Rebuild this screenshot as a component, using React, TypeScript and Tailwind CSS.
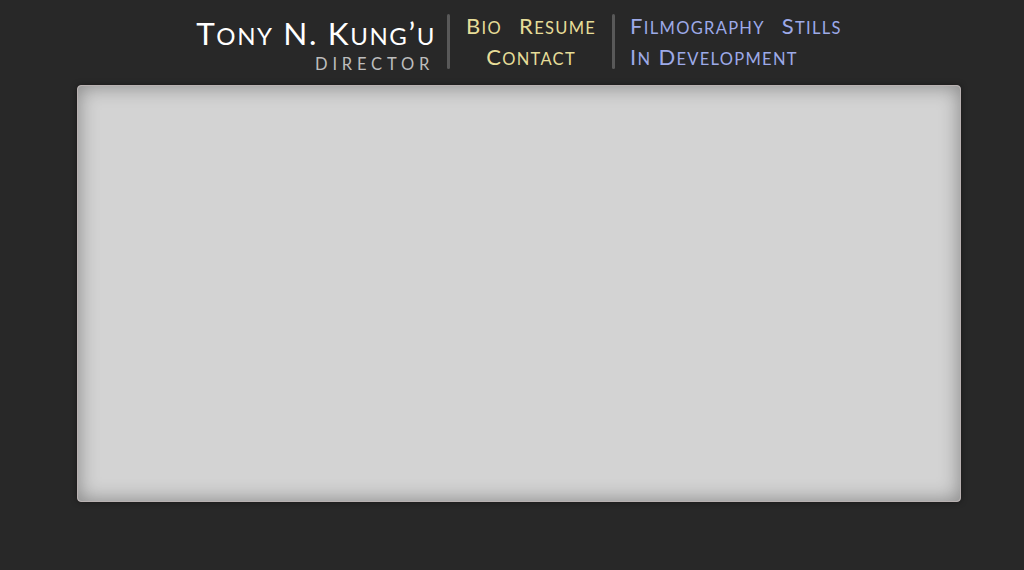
import type { ReactNode } from "react";

// Renders text in small caps: capitals at full size, lowercase as smaller capitals
function SmallCaps({ text, small }: { text: string; small: string }) {
    const parts: ReactNode[] = [];
    let buf = "";
    let bufLower = false;
    const flush = (key: number) => {
        if (!buf) return;
        parts.push(
            bufLower ? (
                <span key={key} className={small}>{buf.toUpperCase()}</span>
            ) : (
                <span key={key}>{buf}</span>
            )
        );
        buf = "";
    };
    [...text].forEach((ch, i) => {
        const lower = ch !== ch.toUpperCase();
        if (buf && lower !== bufLower) flush(i);
        bufLower = lower;
        buf += ch;
    });
    flush(text.length);
    return <>{parts}</>;
}

const yellowLinks = ["Bio", "Resume"];
const blueLinks = ["Filmography", "Stills"];

export default function App() {
    return (
        <main className="min-h-[570px] bg-[#282828] font-['Lato',sans-serif]">
            <div className="w-[884px] ml-[77px] pt-[14px]">
                {/* Header */}
                <header className="flex justify-center items-stretch h-[55px]">
                    <div className="flex flex-col items-end pr-[14px]">
                        <h1 className="text-[31.5px] leading-[34px] mt-[2px] text-white tracking-[1.6px] mr-[-3px] whitespace-nowrap">
                            <SmallCaps text="Tony N. Kung’u" small="text-[24px]" />
                        </h1>
                        <p className="text-[16.5px] leading-[16px] mt-[3px] text-[#bdbdbd] tracking-[4.8px] mr-[-1px] uppercase">
                            Director
                        </p>
                    </div>
                    <div className="w-[3px] rounded-full bg-[#595959]" />
                    <nav className="flex flex-col items-center px-[16px] -mt-[2px] text-[#e6dd98] text-[22px] leading-[28.5px] tracking-[1.3px] whitespace-nowrap">
                        <div className="flex gap-[17px]">
                            {yellowLinks.map((l) => (
                                <a key={l}><SmallCaps text={l} small="text-[16.5px]" /></a>
                            ))}
                        </div>
                        <a><SmallCaps text="Contact" small="text-[16.5px]" /></a>
                    </nav>
                    <div className="w-[3px] rounded-full bg-[#595959]" />
                    <nav className="flex flex-col items-start pl-[15px] -mt-[2px] text-[#9daae8] text-[22px] leading-[28.5px] tracking-[1.3px] whitespace-nowrap">
                        <div className="flex gap-[17px]">
                            {blueLinks.map((l) => (
                                <a key={l}><SmallCaps text={l} small="text-[16.5px]" /></a>
                            ))}
                        </div>
                        <a><SmallCaps text="In Development" small="text-[16.5px]" /></a>
                    </nav>
                </header>

                {/* Content panel */}
                <section className="mt-[16px] h-[417px] rounded-[4px] border border-[#b9b1b1] bg-[#d3d3d3] shadow-[inset_0_0_20px_rgba(0,0,0,0.38),0_0_6px_rgba(0,0,0,0.4)]" />
            </div>
        </main>
    );
}
